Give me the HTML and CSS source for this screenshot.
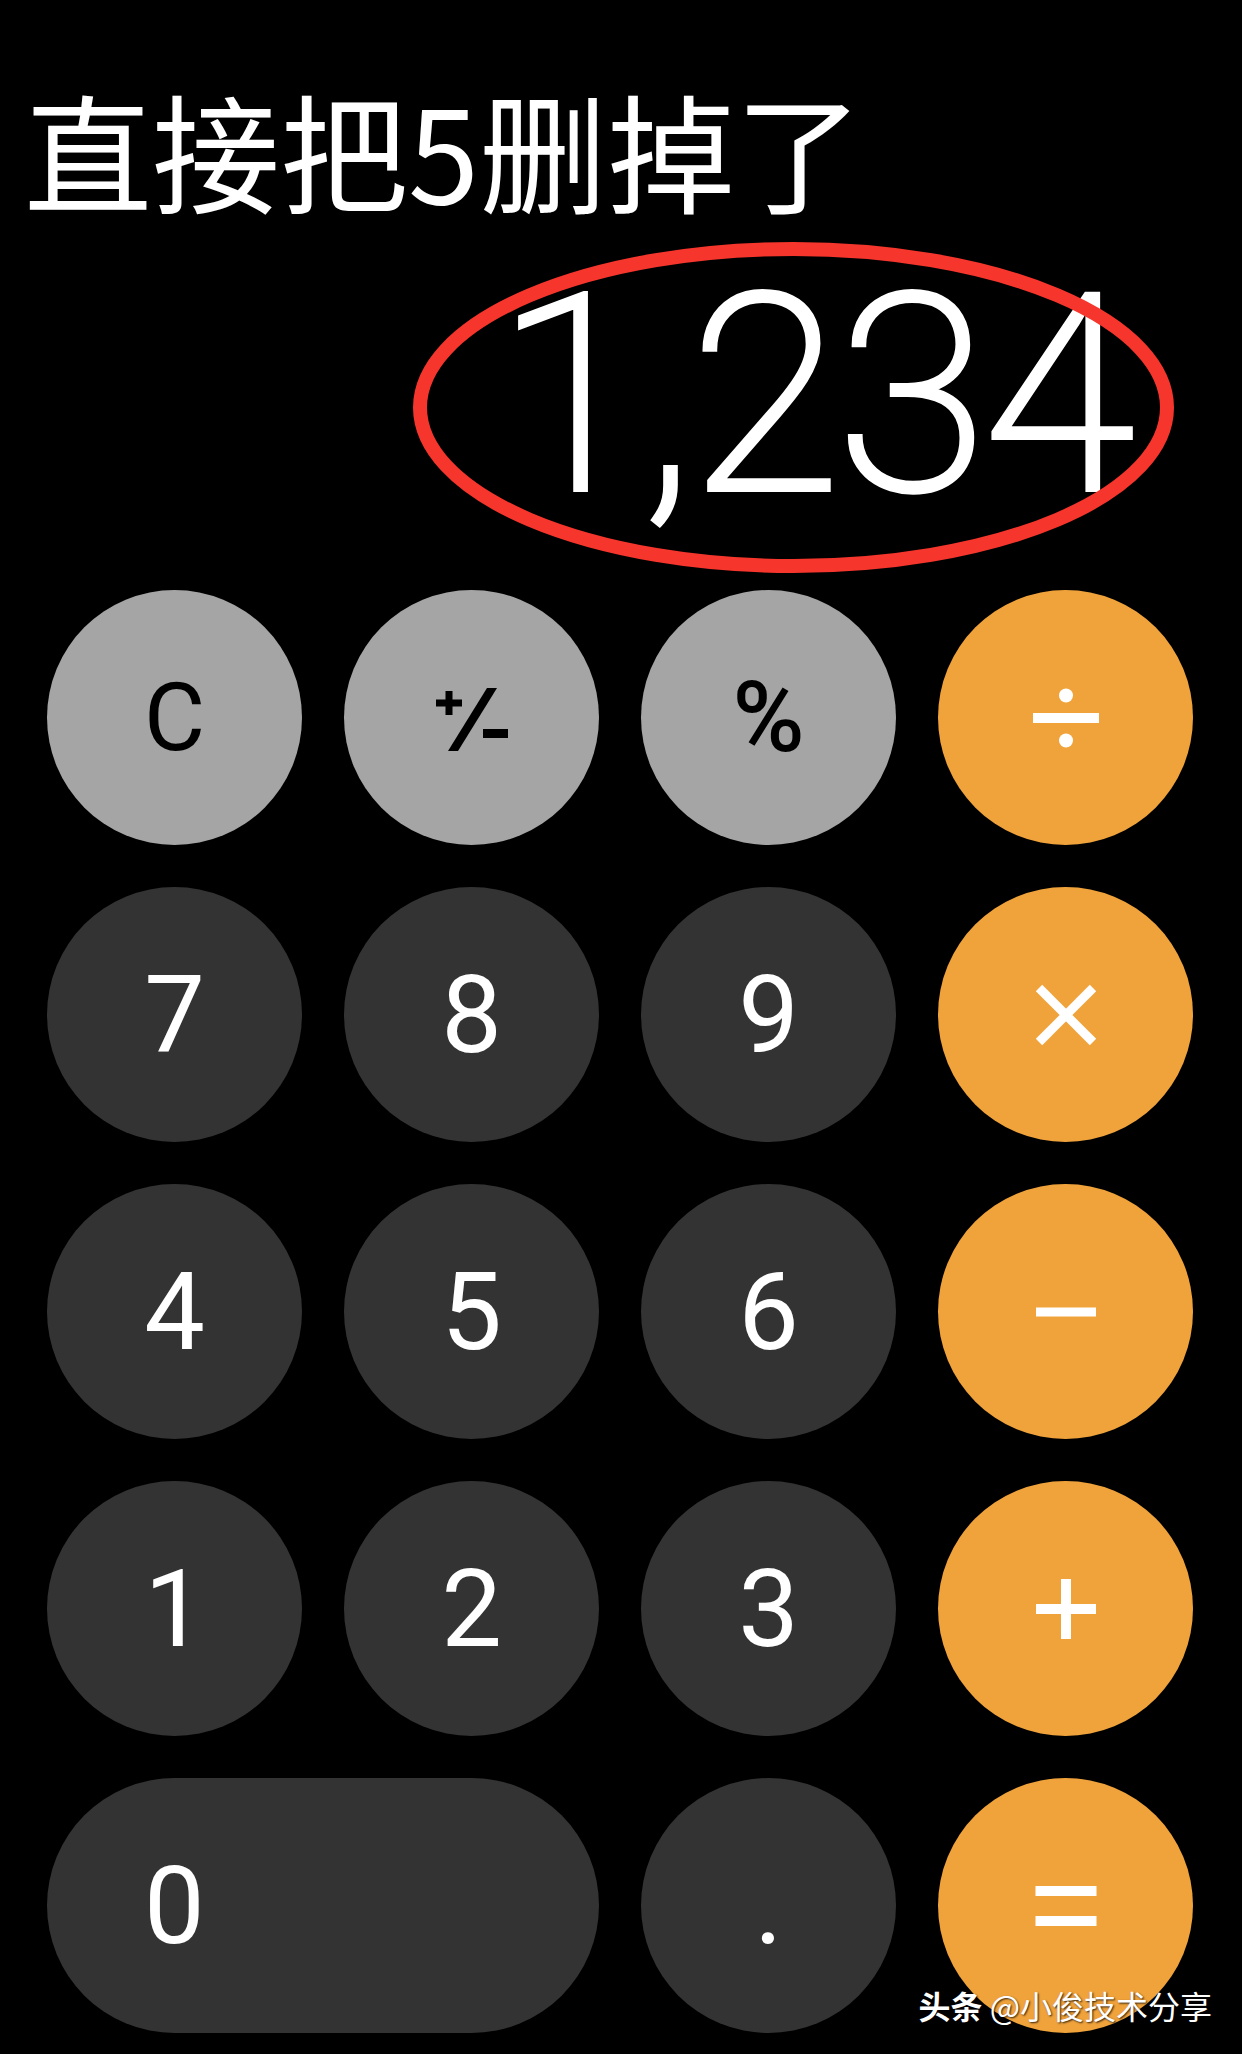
FILE: index.html
```html
<!DOCTYPE html>
<html lang="zh">
<head>
  <meta charset="UTF-8">
  <meta name="viewport" content="width=device-width, initial-scale=1.0">
  <title>计算器</title>
  <link rel="stylesheet" href="styles.css">
</head>
<body>

  <h1 class="title">直接把5删掉了</h1>

  <div class="display">1,234</div>

  <!-- 手画的红圈 -->
  <svg class="ring" width="761" height="331" viewBox="0 0 761 331">
    <ellipse cx="380.5" cy="165.5" rx="373.5" ry="158.5" fill="none" stroke="#f6352c" stroke-width="14"/>
  </svg>

  <div class="keys">
    <div class="key fn">C</div>
    <div class="key fn">
      <svg width="78" height="66" viewBox="0 0 78 66">
        <rect x="3" y="14.5" width="26" height="7"/>
        <rect x="12.5" y="6" width="7" height="24"/>
        <polygon points="54,3 64,3 25,66 15,66"/>
        <rect x="50" y="44" width="25" height="9"/>
      </svg>
    </div>
    <div class="key fn pct">%</div>
    <div class="key op">
      <svg width="70" height="70" viewBox="0 0 70 70">
        <circle cx="35" cy="12.5" r="7"/>
        <rect x="2" y="30" width="66" height="10"/>
        <circle cx="35" cy="57.5" r="7"/>
      </svg>
    </div>

    <div class="key num">7</div>
    <div class="key num">8</div>
    <div class="key num">9</div>
    <div class="key op">
      <svg width="62" height="62" viewBox="0 0 62 62">
        <line x1="4" y1="4" x2="58" y2="58"/>
        <line x1="58" y1="4" x2="4" y2="58"/>
      </svg>
    </div>

    <div class="key num">4</div>
    <div class="key num">5</div>
    <div class="key num">6</div>
    <div class="key op">
      <svg width="62" height="62" viewBox="0 0 62 62">
        <rect x="1" y="26.5" width="60" height="9"/>
      </svg>
    </div>

    <div class="key num">1</div>
    <div class="key num">2</div>
    <div class="key num">3</div>
    <div class="key op">
      <svg width="62" height="62" viewBox="0 0 62 62">
        <rect x="1" y="26" width="60" height="10"/>
        <rect x="26" y="1" width="10" height="60"/>
      </svg>
    </div>

    <div class="key num zero">0</div>
    <div class="key num dot">.</div>
    <div class="key op">
      <svg width="62" height="62" viewBox="0 0 62 62">
        <rect x="0.5" y="11" width="61" height="10"/>
        <rect x="0.5" y="41" width="61" height="10"/>
      </svg>
    </div>
  </div>

  <div class="mark"><b>头条</b> @小俊技术分享</div>

</body>
</html>
```

FILE: styles.css
```css
/* 基本 */
html {
  --c-fn: #a5a5a5;
  --c-num: #333333;
  --c-op: #f1a33b;
}
body {
  margin: 0;
  width: 1242px;
  height: 2054px;
  overflow: hidden;
  position: relative;
  background: #000;
  color: #fff;
  font-family: Roboto, "Liberation Sans", "Noto Sans CJK SC", sans-serif;
}

/* 标题 */
.title {
  margin: 0;
  padding: 85px 0 0 24px;
  font-family: "Noto Sans CJK SC", sans-serif;
  font-size: 128px;
  font-weight: 400;
  line-height: 1;
}

/* 显示屏 */
.display {
  margin-top: 45px;
  height: 280px;
  padding-right: 112px;
  text-align: right;
  font-size: 276px;
  font-weight: 200;
  line-height: 1;
  letter-spacing: -5px;
  -webkit-text-stroke: 4px #fff;
}

.ring {
  position: absolute;
  left: 413px;
  top: 242px;
}

/* 键盘 */
.keys {
  margin-top: 52px;
  padding-left: 47px;
  display: grid;
  grid-template-columns: repeat(4, 255px);
  grid-auto-rows: 255px;
  gap: 42px;
}
.key {
  display: flex;
  align-items: center;
  justify-content: center;
  border-radius: 50%;
  line-height: 1;
}
.fn {
  background: var(--c-fn);
  color: #000;
  font-size: 94px;
}
.fn svg { fill: #000; }
.pct { font-size: 98px; font-weight: 500; }

.num {
  background: var(--c-num);
  font-size: 108px;
}
.zero {
  grid-column: span 2;
  border-radius: 128px;
  justify-content: flex-start;
  padding-left: 97px;
}

.op { background: var(--c-op); }
.op svg { fill: #fff; stroke: #fff; stroke-width: 9; }
.op svg rect, .op svg circle { stroke: none; }

/* 水印 */
.mark {
  position: absolute;
  right: 30px;
  top: 1989px;
  font-family: "Noto Sans CJK SC", sans-serif;
  font-size: 32px;
  line-height: 1;
  color: #fff;
  text-shadow: 1px 1px 2px rgba(0, 0, 0, 0.8);
}
.mark b { font-weight: 700; }
```
